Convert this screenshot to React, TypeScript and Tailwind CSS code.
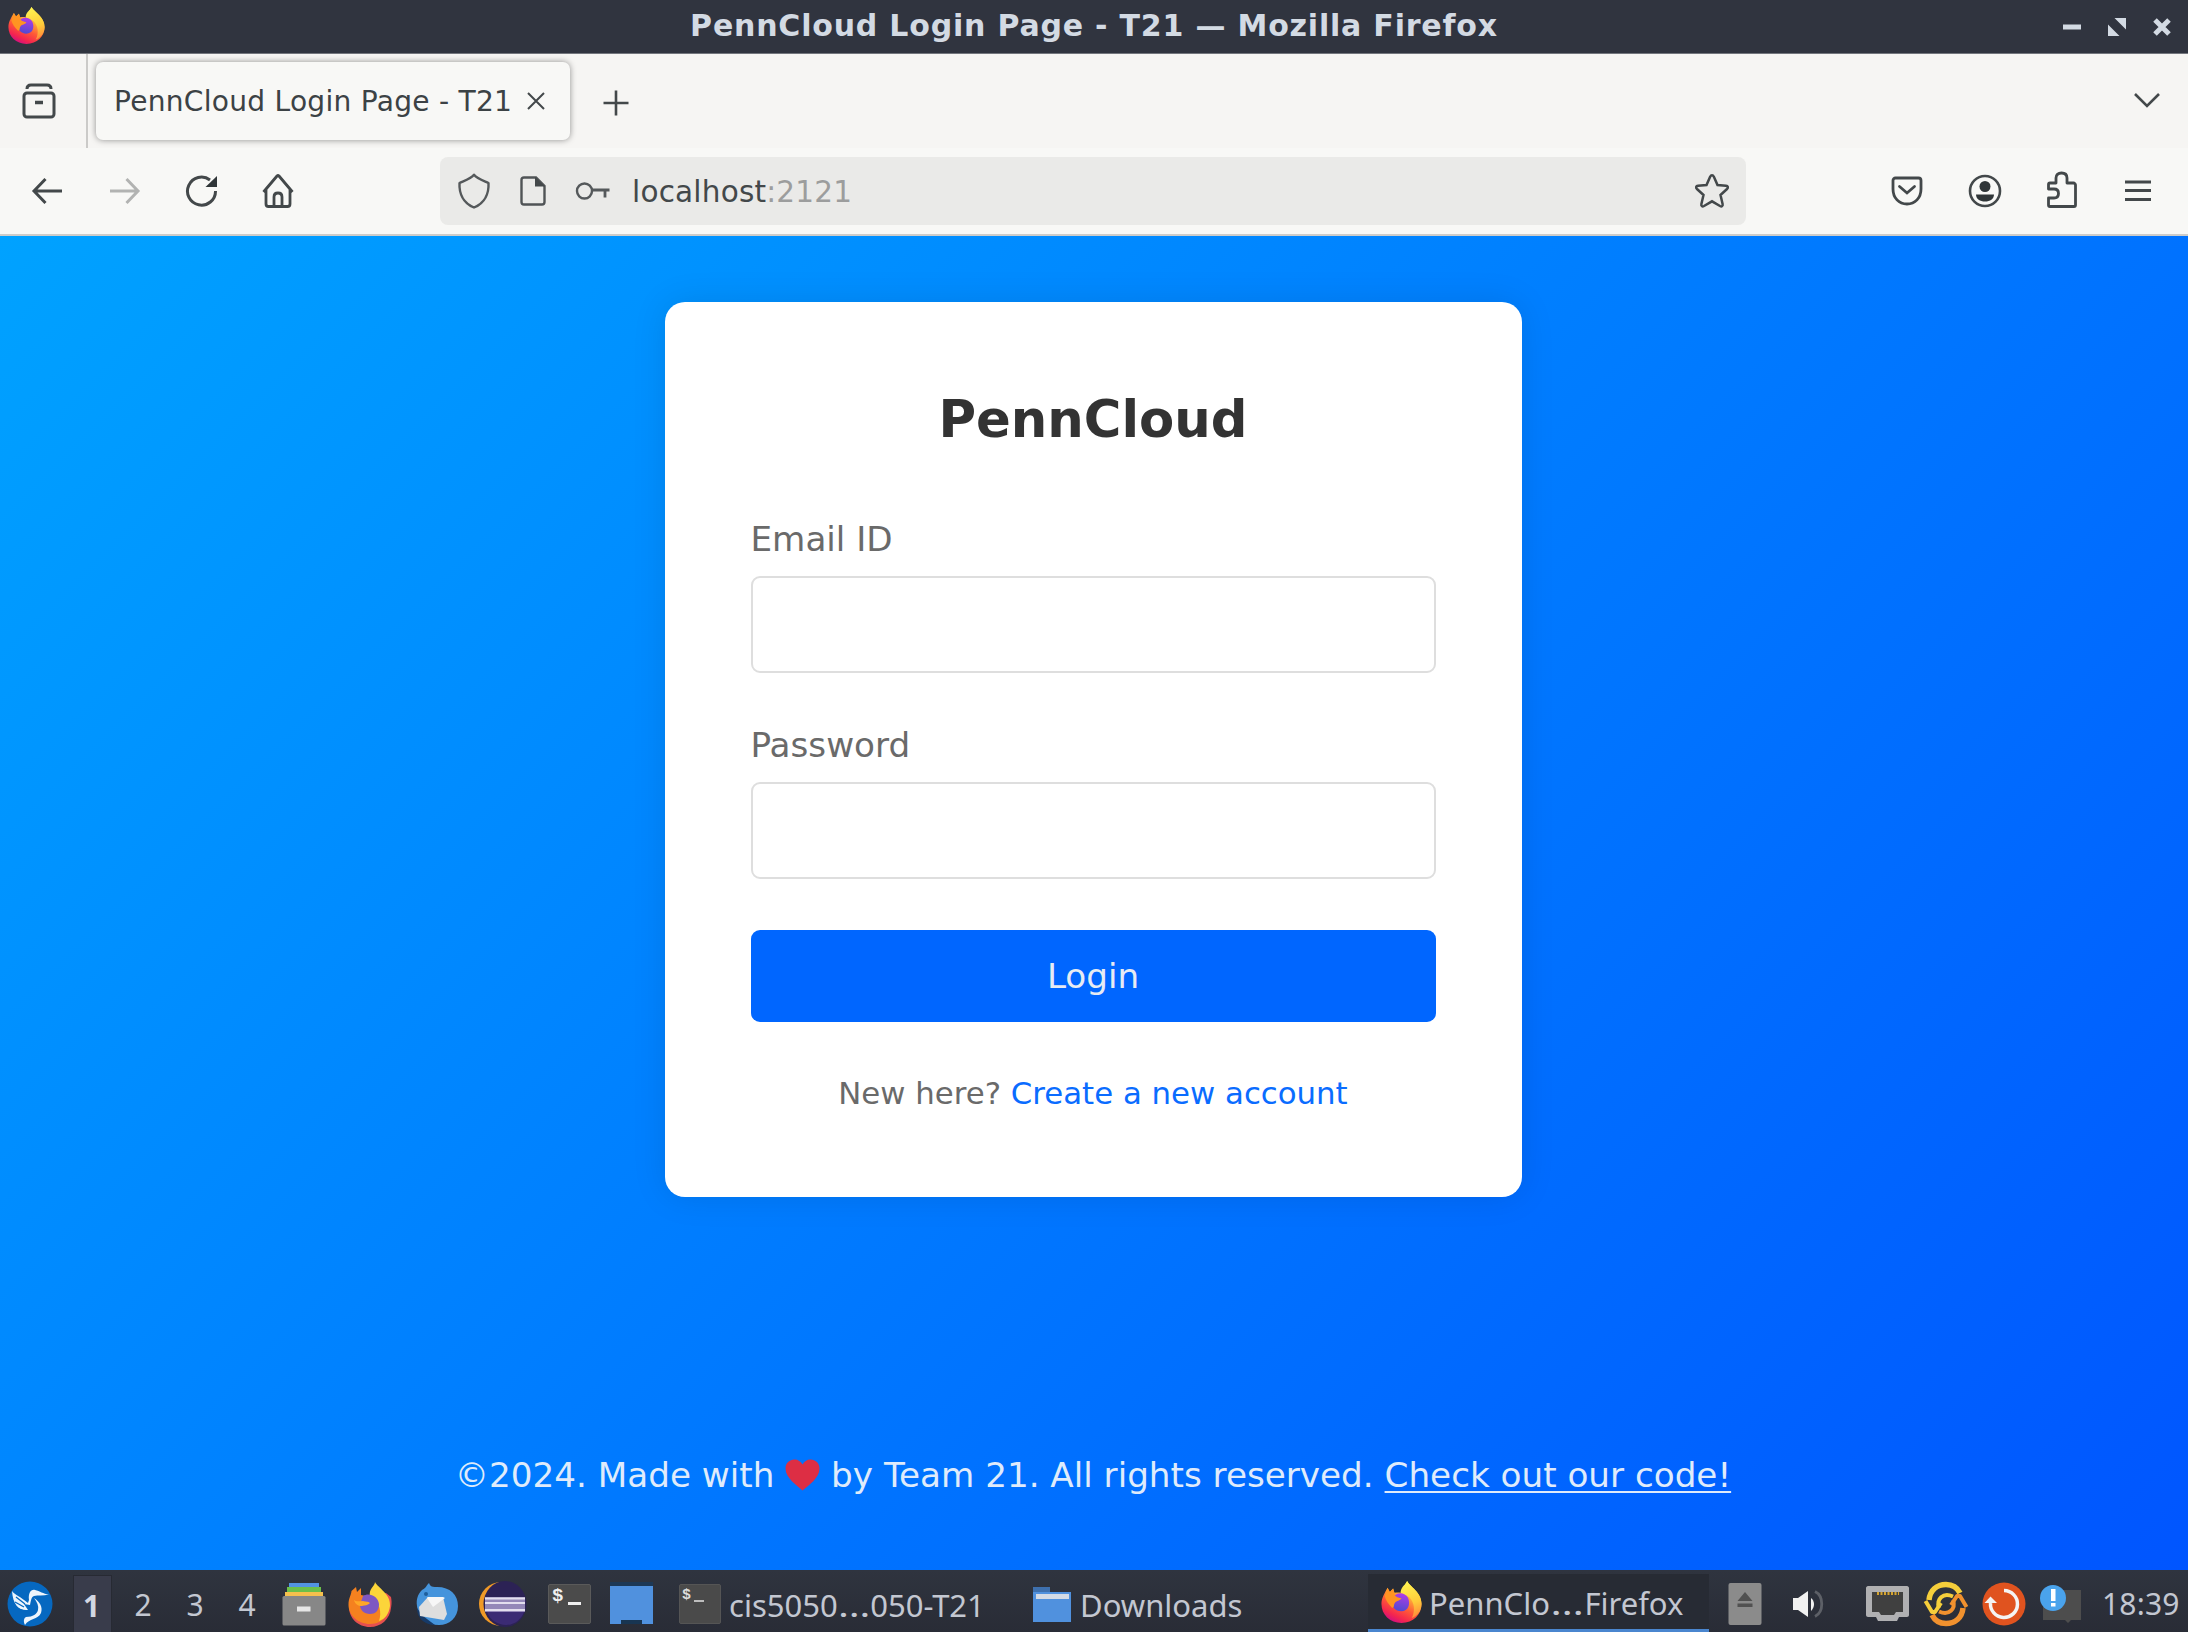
import React from "react";

type SvgProps = { w: number; h: number; className?: string; children: React.ReactNode };

function Svg({ w, h, className = "", children }: SvgProps) {
  return (
    <svg width={w} height={h} viewBox={`0 0 ${w} ${h}`} fill="none" className={`shrink-0 ${className}`}>
      {children}
    </svg>
  );
}

const INK = "#43484a";

function FirefoxLogo({ id, w, h, className }: { id: string; w: number; h: number; className?: string }) {
  return (
    <svg width={w} height={h} viewBox="0 0 44 50" preserveAspectRatio="none" className={`shrink-0 ${className ?? ""}`}>
      <defs>
        <linearGradient id={`${id}-body`} x1="0.8" y1="0.1" x2="0.35" y2="1">
          <stop offset="0" stopColor="#fff44f" />
          <stop offset="0.3" stopColor="#ffb13a" />
          <stop offset="0.6" stopColor="#ff5a36" />
          <stop offset="0.85" stopColor="#f4254f" />
          <stop offset="1" stopColor="#d3107e" />
        </linearGradient>
        <linearGradient id={`${id}-flame`} x1="0.4" y1="0" x2="0.6" y2="1">
          <stop offset="0" stopColor="#fff350" />
          <stop offset="0.6" stopColor="#ffcb3a" />
          <stop offset="1" stopColor="#ff8a3a" />
        </linearGradient>
        <linearGradient id={`${id}-core`} x1="0.6" y1="0" x2="0.4" y2="1">
          <stop offset="0" stopColor="#b13be8" />
          <stop offset="1" stopColor="#4f4bd0" />
        </linearGradient>
      </defs>
      <path
        d="M22 50C9.500 50 0.500 40 0.500 27.500C0.500 20 3.500 16 4.500 13L7 8L9.500 13L13 9L14.500 14C17 13.500 19 13.500 21 14L28 0C31 7 43.500 13 43.500 27.500C43.500 40 34.500 50 22 50Z"
        fill={`url(#${id}-body)`}
      />
      <path
        d="M28 0C31 7 43.500 13 43.500 27C43.500 36 38 42 33 44C37 36 36 25 30 19C26 16 21 15 21 13C22 6 27 4 28 0Z"
        fill={`url(#${id}-flame)`}
      />
      <path d="M15 17C19 13 26 14 29 20C32 28 29 36 22 36C15 36 11 30 13 24Z" fill={`url(#${id}-core)`} />
      <path d="M4 18L7 8L9.500 13L13 9L14.500 15C14.500 18 17 20 22 20.500C20 24 17 23 15 26C13 29 15 31 12 32C8 28 5 23 4 18Z" fill="#ff9422" />
    </svg>
  );
}

function FirefoxFlat({ className }: { className?: string }) {
  return (
    <Svg w={44} h={46} className={className}>
      <path d="M22 46C10 46 1 37 1 26L6 18L38 12L43 16C43.500 19 44 22 43 27C42 38 33 46 22 46Z" fill="#e5504f" />
      <path d="M22 43C10 43 0.500 34 0.500 24C0.500 17 3 15 3.500 10L8 6L9 11L13 7L13 14L22 16L38 20L39 34C35 40 29 43 22 43Z" fill="#f5811f" />
      <path d="M27 1C30 7 43 13 42 25C41 33 37 38 31 40C34 32 32 20 22 16C20 8 27 5 27 1Z" fill="#fcd53a" />
      <path d="M15 15C21 11 30 15 31 23C31 30 27 33 22 33C16 33 12 29 12 24Z" fill="#7e57c2" />
      <path d="M6 19C8 21 12 20 15 20C18 21 20 20 22 22C19 25 17 24 14 25C10 25 7 23 6 19Z" fill="#ffa726" />
    </Svg>
  );
}

function TitleBar() {
  return (
    <header className="relative flex h-[54px] shrink-0 items-center justify-between border-b border-[#73767d] bg-[#30343f] pl-[8px] pr-[17px]">
      <FirefoxLogo id="title" w={37} h={37} className="-mt-[2px]" />
      <h1 className="absolute inset-x-0 top-[8px] text-center text-[30px] leading-[36px] font-bold tracking-[0.8px] text-[#d3dae3]">
        PennCloud Login Page - T21 — Mozilla Firefox
      </h1>
      <div className="flex items-center gap-[27px]">
        <Svg w={18} h={18}>
          <path d="M0 6.500H18V11.500H0Z" fill="#d3dae3" />
        </Svg>
        <Svg w={18} h={18}>
          <path d="M6.500 0H18V11.500ZM0 6.500V18H11.500Z" fill="#d3dae3" />
        </Svg>
        <Svg w={18} h={18}>
          <path d="M2 2L16 16M16 2L2 16" stroke="#d3dae3" strokeWidth="5" />
        </Svg>
      </div>
    </header>
  );
}

function TabStrip() {
  return (
    <div className="flex h-[94px] shrink-0 bg-[#f6f5f3]">
      <div className="flex w-[88px] items-center border-r-2 border-[#cbcac8] pl-[21px]">
        <Svg w={36} h={36}>
          <path d="M6 6C6 3 8 2 10 2H26C28 2 30 3 30 6" stroke={INK} strokeWidth="3" />
          <rect x="3" y="10" width="30" height="24" rx="3" stroke={INK} strokeWidth="3" />
          <path d="M14 19.500H22" stroke={INK} strokeWidth="3.500" />
        </Svg>
      </div>
      <div className="mt-[8px] ml-[8px] flex h-[78px] w-[474px] items-center rounded-[7px] bg-[#f8f8f6] pl-[18px] shadow-[0_0_6px_rgba(0,0,0,0.42)]">
        <span className="w-[413px] shrink-0 pt-[2px] whitespace-nowrap text-[28.1px] leading-[34px] tracking-[0.25px] text-[#3c4245]">
          PennCloud Login Page - T21
        </span>
        <Svg w={20} h={20} className="ml-[-1px]">
          <path d="M2 2L18 18M18 2L2 18" stroke={INK} strokeWidth="2" />
        </Svg>
      </div>
      <Svg w={26} h={26} className="mt-[36px] ml-[33px]">
        <path d="M13 0.500V25.500M0.500 13H25.500" stroke={INK} strokeWidth="2.600" />
      </Svg>
      <Svg w={28} h={18} className="mt-[37px] mr-[27px] ml-auto">
        <path d="M2 3L14 15L26 3" stroke={INK} strokeWidth="2.600" />
      </Svg>
    </div>
  );
}

function NavBar() {
  return (
    <div className="flex h-[88px] shrink-0 items-center border-b-2 border-[#cdccca] bg-[#f8f8f6]">
      <Svg w={32} h={28} className="ml-[31px]">
        <path d="M31 14H3M14.500 2L3 14L14.500 26" stroke={INK} strokeWidth="3" />
      </Svg>
      <Svg w={32} h={28} className="ml-[46px]">
        <path d="M1 14H29M17.500 2L29 14L17.500 26" stroke="#b2b3b2" strokeWidth="3" />
      </Svg>
      <Svg w={34} h={34} className="ml-[44px]">
        <path d="M30.500 17A14 14 0 1 1 25 6" stroke={INK} strokeWidth="3" />
        <path d="M32 2V13H20.500Z" fill="#303638" />
      </Svg>
      <Svg w={34} h={36} className="ml-[42px]">
        <path
          d="M2.500 19L16 3Q17 2 18 3L31.500 19M5 16V31C5 32.500 6 33.500 7.500 33.500H26.500C28 33.500 29 32.500 29 31V16"
          stroke={INK}
          strokeWidth="2.800"
          strokeLinejoin="round"
        />
        <path d="M13 33V24C13 21.500 14 20 17 20S21 21.500 21 24V33" stroke={INK} strokeWidth="2.800" />
      </Svg>
      <div className="ml-[145px] flex h-[68px] w-[1306px] items-center rounded-[8px] bg-[#eaeae8] pl-[17px]">
        <Svg w={34} h={36}>
          <path
            d="M17 1.800C20 5.500 26 7.500 31.500 10C32 20 28 30 17 34.500C6 30 2 20 2.500 10C8 7.500 14 5.500 17 1.800Z"
            stroke="#55595b"
            strokeWidth="2.400"
            strokeLinejoin="round"
          />
        </Svg>
        <Svg w={28} h={32} className="ml-[28px]">
          <path d="M5 2.500H17L25.500 11V27C25.500 28.500 24.500 29.500 23 29.500H5C3.500 29.500 2.500 28.500 2.500 27V5C2.500 3.500 3.500 2.500 5 2.500Z" stroke="#505456" strokeWidth="2.400" />
          <path d="M16 2L26 11.500H16Z" fill="#43484a" />
        </Svg>
        <Svg w={36} h={20} className="ml-[28px]">
          <circle cx="9.500" cy="10" r="7.500" stroke="#55595b" strokeWidth="2.400" />
          <path d="M17 9H34.500M30 9V16.500" stroke="#55595b" strokeWidth="2.800" />
        </Svg>
        <span className="ml-[21px] pt-[2px] text-[29.5px] leading-[36px] tracking-[0.2px] text-[#43484a]">
          localhost<span className="text-[#9c9d9d]">:2121</span>
        </span>
        <Svg w={36} h={36} className="mr-[16px] ml-auto">
          <path
            d="M18 2.200C19 2.200 19.500 3 20 4L23.500 12L32 12.800C34 13 34.500 14.500 33 16L26.500 22L28.600 31C29 33 27.800 34 26 33L18 28.300L10 33C8.200 34 7 33 7.400 31L9.500 22L3 16C1.500 14.500 2 13 4 12.800L12.500 12L16 4C16.500 3 17 2.200 18 2.200Z"
            stroke={INK}
            strokeWidth="2.500"
          />
        </Svg>
      </div>
      <Svg w={32} h={30} className="ml-[145px]">
        <path d="M4.500 2H27.500C29 2 30 3 30 4.500V13C30 22 24 28 16 28S2 22 2 13V4.500C2 3 3 2 4.500 2Z" stroke={INK} strokeWidth="2.800" />
        <path d="M8.500 10.500L16 17L23.500 10.500" stroke={INK} strokeWidth="2.800" strokeLinecap="round" />
      </Svg>
      <Svg w={34} h={34} className="ml-[45px]">
        <circle cx="17" cy="17" r="15" stroke={INK} strokeWidth="2.600" />
        <circle cx="17" cy="12.500" r="5.500" fill="#303638" />
        <path d="M8 20.500H26C26 25 22 27.500 17 27.500S8 25 8 20.500Z" fill="#303638" />
      </Svg>
      <Svg w={32} h={38} className="ml-[44px] -mt-[2px]">
        <path
          d="M4 12H10V7C10 4 12 2 15.500 2S21 4 21 7V12H27.500C28.500 12 29.500 13 29.500 14V34C29.500 35 29 35.500 28 35.500H4C3 35.500 2.500 35 2.500 34V27H8C11 27 12.500 25 12.500 22.500S11 18 8 18H2.500V13.500C2.500 12.500 3 12 4 12Z"
          stroke={INK}
          strokeWidth="2.800"
          strokeLinejoin="round"
        />
      </Svg>
      <Svg w={26} h={24} className="ml-[47px]">
        <path d="M0 3H26M0 11.500H26M0 20.500H26" stroke={INK} strokeWidth="2.800" />
      </Svg>
    </div>
  );
}

function Field({ label, type, className = "" }: { label: string; type: string; className?: string }) {
  return (
    <label className={`block ${className}`}>
      <span className="block text-[34.2px] leading-[40px] text-[#6a6a6a]">{label}</span>
      <input type={type} className="mt-[17px] block h-[97px] w-full rounded-[9px] border-2 border-[#dedede] bg-white" />
    </label>
  );
}

function LoginPage() {
  return (
    <main className="flex min-h-0 flex-1 flex-col items-center bg-[linear-gradient(135deg,#00a2ff,#0055ff)] pt-[66px] pr-[2px]">
      <form className="h-[895px] w-[857px] rounded-[20px] bg-white px-[86px] pt-[87px] shadow-[0_0_34px_rgba(0,0,0,0.1)]">
        <h2 className="mb-[70px] text-center text-[51.3px] leading-[60px] font-bold text-[#333333]">PennCloud</h2>
        <Field label="Email ID" type="email" className="mb-[52px]" />
        <Field label="Password" type="password" className="mb-[51px]" />
        <button type="button" className="block h-[92px] w-full rounded-[9px] bg-[#0066ff] text-[34.2px] leading-[40px] text-[#e6ebf3]">
          Login
        </button>
        <p className="mt-[53px] text-center text-[30.8px] leading-[36px] text-[#6a6a6a]">
          New here? <a className="text-[#0a6cff]">Create a new account</a>
        </p>
      </form>
      <footer className="mt-[257px] flex items-center text-[34.2px] leading-[42px] whitespace-pre text-[#dfebfb]">
        <span>©2024. Made with </span>
        <Svg w={35} h={34}>
          <path d="M17.500 32.500C12 27.500 0.500 20 0.500 10.500C0.500 5 4.500 1.500 9.500 1.500C13 1.500 16 3.500 17.500 6.500C19 3.500 22 1.500 25.500 1.500C30.500 1.500 34.500 5 34.500 10.500C34.500 20 23.500 27.500 17.500 32.500Z" fill="#dd2e44" />
        </Svg>
        <span> by Team 21. All rights reserved. </span>
        <a className="underline decoration-2 underline-offset-4">Check out our code!</a>
      </footer>
    </main>
  );
}

function LauncherTerminal({ className }: { className?: string }) {
  return (
    <div className={`flex h-[40px] w-[43px] shrink-0 gap-[5px] rounded-[2px] border border-[#5a5a5a] bg-[#4b4b4b] pl-[3px] ${className ?? ""}`}>
      <span className='font-["Liberation_Mono"] text-[19px] leading-[23px] font-bold text-[#f0f0f0]'>$</span>
      <i className="mt-[17px] h-[3px] w-[13px] bg-[#f0f0f0]" />
    </div>
  );
}

function TaskTerminal({ className }: { className?: string }) {
  return (
    <div className={`flex h-[40px] w-[42px] shrink-0 gap-[3px] rounded-[2px] border border-[#555555] bg-[#4a4a4a] pl-[2px] ${className ?? ""}`}>
      <span className='font-["Liberation_Mono"] text-[15px] leading-[21px] font-bold text-[#dcdcdc]'>$</span>
      <i className="mt-[15px] h-[2px] w-[10px] bg-[#bdbdbd]" />
    </div>
  );
}

function Ellipsis() {
  return <span className="mx-[4px] inline-block scale-x-[1.32]">…</span>;
}

function Taskbar() {
  return (
    <nav className='flex h-[62px] shrink-0 items-center overflow-hidden bg-linear-to-b from-[#2f343f] to-[#292c36] font-["Noto_Sans"] text-[31px] leading-[40px] text-[#c3c7d1]'>
      <Svg w={46} h={46} className="mt-[6px] ml-[7px]">
        <circle cx="23" cy="23" r="22.500" fill="#0668c0" />
        <path d="M5 10C8 14 14 16 21 22L22 19C21 12 24 8 28 9C33 10 36 13 42 13.500C36 15 31 14 27 15C24 16 24 20 23 24L17 23L21 29C12 30 6 24 5 10Z" fill="#eef5fc" />
        <path d="M9 16L18 23M8 21L17 26M12 28L20 31" stroke="#0668c0" strokeWidth="1.300" />
        <path d="M27 17C33 21 36 26 34 32C31 39 22 37 18 44C16 40 17 37 19 36C26 36 30 33 31 29C32 25 30 21 27 17Z" fill="#eef5fc" />
      </Svg>
      <div className="ml-[20px] flex h-[57px] w-[39px] items-center justify-center self-end border border-b-0 border-[#272a33] bg-[#393c4b] pt-[4px] pr-[2px] text-[30px] font-bold text-[#d3d7e2]">
        1
      </div>
      <span className="ml-[5px] w-[52px] pt-[7px] text-center text-[30px]">2</span>
      <span className="w-[52px] pt-[7px] text-center text-[30px]">3</span>
      <span className="w-[52px] pt-[7px] text-center text-[30px]">4</span>
      <Svg w={44} h={44} className="mt-[5px] ml-[9px]">
        <path d="M7 1H37V6H7Z" fill="#5294e2" />
        <path d="M5 5H39V10H5Z" fill="#6cc04a" />
        <path d="M3 10H41V15H3Z" fill="#f6c04d" />
        <rect x="0.500" y="14" width="43" height="29.500" rx="1.500" fill="#878787" />
        <path d="M15 24.500H28.500V29.500H15Z" fill="#e6e6e6" />
      </Svg>
      <FirefoxFlat className="mt-[5px] ml-[22px]" />
      <Svg w={44} h={44} className="mt-[6px] ml-[23px]">
        <path d="M7 8C11 6 11 4 14 1C15 4 17 5 20 5C34 4 43 12 43 24C43 36 34 43 24 43C12 43 3 36 2 24C1 17 3 12 7 8Z" fill="#4594dc" />
        <path d="M2 26C2 38 12 43 20 43L8 34Z" fill="#173a68" />
        <path d="M4 25L13 15L28 15L32 32L29 38L5 34Z" fill="#dedede" />
        <path d="M12 16L18 25L30 16L28 15H13Z" fill="#f7f7f7" />
        <circle cx="11" cy="12" r="2" fill="#1f5f9c" />
      </Svg>
      <Svg w={48} h={48} className="mt-[6px] ml-[20px]">
        <circle cx="22" cy="24" r="22" fill="#f09a27" />
        <ellipse cx="26" cy="24" rx="21.500" ry="23" fill="#2c2255" />
        <path d="M8 32H45C42 40 35 45 27 45S11 40 8 32Z" fill="#3b2b74" />
        <path d="M6 17H46V32H6Z" fill="#9488b8" />
        <path d="M6 18.500H46M6 23H46M6 30H46" stroke="#e3dfee" strokeWidth="2" />
      </Svg>
      <LauncherTerminal className="mt-[5px] ml-[21px]" />
      <Svg w={43} h={43} className="mt-[5px] ml-[19px]">
        <path d="M0 0H43V4H0Z" fill="#1d3855" />
        <path d="M0 4H43V42H32V38H11V42H0Z" fill="#5091de" />
        <path d="M11 38H32V42H11Z" fill="#183552" />
      </Svg>
      <TaskTerminal className="mt-[5px] ml-[26px]" />
      <span className="ml-[8px] w-[257px] pt-[7px] whitespace-nowrap">
        cis5050
        <Ellipsis />
        050-T21
      </span>
      <Svg w={38} h={36} className="mt-[6px] ml-[47px]">
        <path d="M0 1H17V6H38V36H0Z" fill="#3e70ae" />
        <path d="M0 6H38V36H0Z" fill="#5091de" />
        <path d="M3 8H36V13H3Z" fill="#d4dbe6" />
      </Svg>
      <span className="ml-[9px] w-[168px] pt-[7px] whitespace-nowrap">Downloads</span>
      <div className="ml-[120px] flex h-[58px] w-[341px] items-center self-end border-b-[3px] border-[#4a86cf] bg-[#272b34] pl-[13px]">
        <FirefoxLogo id="task" w={41} h={42} />
        <span className="ml-[7px] pt-[3px] whitespace-nowrap">
          PennClo
          <span className="mx-[5px] inline-block scale-x-[1.36]">…</span>
          Firefox
        </span>
      </div>
      <Svg w={34} h={44} className="mt-[5px] ml-[19px]">
        <rect x="0.500" y="1" width="33" height="42" rx="2" fill="#8b8b8b" />
        <path d="M17 10L24.500 19H9.500ZM9.500 21.500H24.500V25H9.500Z" fill="#515151" />
      </Svg>
      <Svg w={32} h={32} className="mt-[5px] ml-[30px]">
        <path d="M1 10H6L16 3V29L6 22H1Z" fill="#f1f1f1" />
        <path d="M19 10C23 13 23 19 19 23Z" fill="#f1f1f1" />
        <path d="M23 3.500C32 8 32 24 23 28.500" stroke="#5d6067" strokeWidth="2.800" />
      </Svg>
      <Svg w={43} h={38} className="mt-[5px] ml-[42px]">
        <path d="M2 1H41C42 1 43 2 43 3V30C43 31 42 32 41 32H33L31 36H12L10 32H2C1 32 0 31 0 30V3C0 2 1 1 2 1Z" fill="#b0b0b2" />
        <path d="M6 7H37V27H30L28 30H15L13 27H6Z" fill="#404040" />
        <path d="M11 8.500H33" stroke="#d7a52f" strokeWidth="3" strokeDasharray="2 1.500" />
      </Svg>
      <Svg w={46} h={46} className="mt-[5px] ml-[14px]">
        <path d="M37 12C34 6 29 3.500 23 3.500C14 3.500 7 9 6 19" stroke="#f5ce3b" strokeWidth="5.500" />
        <path d="M2.500 20L9 31L12 31L18 22" stroke="#f5ce3b" strokeWidth="4" strokeLinejoin="round" />
        <path d="M16 27C13 18 20 11 30 15.500" stroke="#f5ce3b" strokeWidth="4" />
        <g transform="rotate(180 23 23)">
          <path d="M37 12C34 6 29 3.500 23 3.500C14 3.500 7 9 6 19" stroke="#f1912e" strokeWidth="5.500" />
          <path d="M2.500 20L9 31L12 31L18 22" stroke="#f1912e" strokeWidth="4" strokeLinejoin="round" />
          <path d="M16 27C13 18 20 11 30 15.500" stroke="#f1912e" strokeWidth="4" />
        </g>
      </Svg>
      <Svg w={44} h={44} className="mt-[5px] ml-[13px]">
        <circle cx="22" cy="22" r="21.500" fill="#e0531f" />
        <path d="M22 8.500A13.500 13.500 0 1 1 8.500 21" stroke="#f4f4f4" strokeWidth="3.500" />
        <path d="M2.500 21H15L8.500 14.500Z" fill="#f4f4f4" />
      </Svg>
      <Svg w={42} h={40} className="mt-[5px] ml-[14px]">
        <path d="M3 6H41V36H31L28 39L25 36H3Z" fill="#4d4d4d" />
        <circle cx="13" cy="14" r="13" fill="#4aa3ec" />
        <path d="M11 5H15.500V17H11ZM11 19H15.500V22.500H11Z" fill="#ffffff" />
      </Svg>
      <span className="ml-[20px] pt-[5px] text-[30px] whitespace-nowrap tracking-[0.2px]">18:39</span>
    </nav>
  );
}

export default function App() {
  return (
    <div className='flex h-[1632px] w-[2188px] flex-col overflow-hidden font-["DejaVu_Sans",sans-serif]'>
      <TitleBar />
      <TabStrip />
      <NavBar />
      <LoginPage />
      <Taskbar />
    </div>
  );
}
